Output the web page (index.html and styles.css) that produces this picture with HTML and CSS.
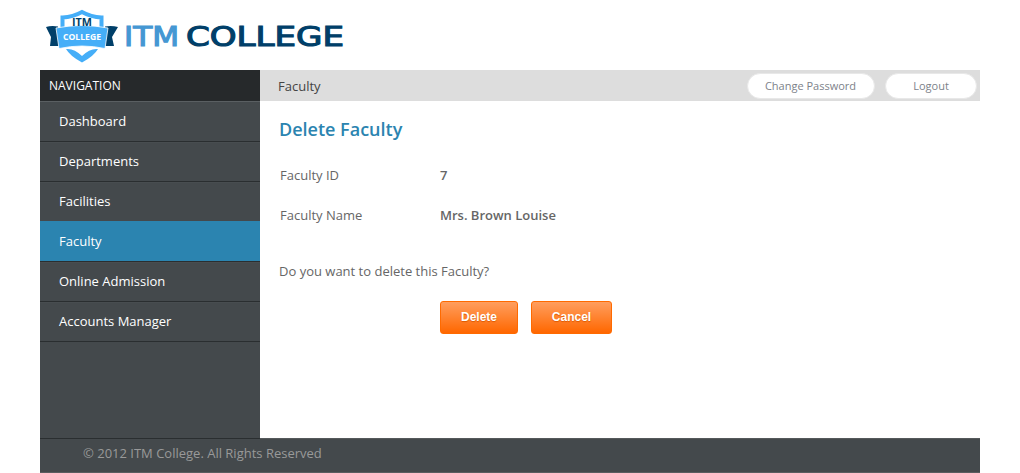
FILE: index.html
```html
<!DOCTYPE html>
<html lang="en">
<head>
<meta charset="utf-8">
<title>Delete Faculty</title>
<link rel="stylesheet" href="styles.css">
</head>
<body>
<div class="page">
  <header class="header">
    <svg class="logo" width="310" height="70" viewBox="40 0 310 70" role="img" aria-label="ITM College">
      <path fill="#003f69" d="M46 27Q51 25.500 58 26.500L59 46H50L51 37ZM118 27Q112 25.500 105 26.500L104 46H114L112 37Z"/>
      <path fill="#fff" stroke="#45aef8" stroke-width="4" d="M62.500 28V17.500Q73 17 82 12Q91 17 101.500 17.500V28"/>
      <path fill="#45aef8" stroke="#fff" stroke-width=".8" d="M56 28Q82 23 108 28L105 48.500Q82 43.500 59 48.500Z"/>
      <path fill="#45aef8" d="M66 49Q74 48 82 56Q90 48 98 49Q94 56 82 62.500Q70 56 66 49Z"/>
      <text class="badge-top" x="72" y="26" textLength="20" lengthAdjust="spacingAndGlyphs">ITM</text>
      <text class="badge-name" x="63" y="40" textLength="38" lengthAdjust="spacingAndGlyphs">COLLEGE</text>
      <text class="word word-light" x="124" y="46" textLength="55" lengthAdjust="spacingAndGlyphs">ITM</text>
      <text class="word word-dark" x="186" y="46" textLength="158" lengthAdjust="spacingAndGlyphs">COLLEGE</text>
    </svg>
  </header>
  <div class="columns">
    <nav class="sidebar">
      <h2 class="nav-title">NAVIGATION</h2>
      <a class="nav-item">Dashboard</a>
      <a class="nav-item">Departments</a>
      <a class="nav-item before-active">Facilities</a>
      <a class="nav-item active">Faculty</a>
      <a class="nav-item">Online Admission</a>
      <a class="nav-item">Accounts Manager</a>
    </nav>
    <main class="main">
      <div class="topbar">
        <span class="crumb">Faculty</span>
        <a class="pill pill-password">Change Password</a>
        <a class="pill pill-logout">Logout</a>
      </div>
      <section class="content">
        <h1 class="title">Delete Faculty</h1>
        <dl class="details">
          <dt>Faculty ID</dt><dd>7</dd>
          <dt>Faculty Name</dt><dd>Mrs. Brown Louise</dd>
        </dl>
        <p class="question">Do you want to delete this Faculty?</p>
        <div class="actions">
          <button class="button button-delete">Delete</button>
          <button class="button button-cancel">Cancel</button>
        </div>
      </section>
    </main>
  </div>
  <footer class="footer">© 2012 ITM College. All Rights Reserved</footer>
</div>
</body>
</html>
```
FILE: styles.css
```css
* { box-sizing: border-box; }
body { margin: 0; background: #fff; color: #666; font: 13px/20px "Open Sans", sans-serif; }
.page { width: 940px; height: 473px; margin: 0 auto; overflow: hidden; }
.header { height: 70px; }
.logo { display: block; }
.badge-top { font: 700 10px "Open Sans", sans-serif; fill: #003f69; }
.badge-name { font: 700 9px "Open Sans", sans-serif; fill: #fff; }
.word { font: 26px "DejaVu Sans", sans-serif; stroke-width: 1.1px; }
.word-light { fill: #4597d3; stroke: #4597d3; }
.word-dark { fill: #003f69; stroke: #003f69; }
.columns { display: flex; height: 368px; }
.sidebar { width: 220px; height: 369px; background: #44494c; border-bottom: 1px solid #2a2e30; position: relative; }
.nav-title { height: 31px; margin: 0; padding-left: 9px; background: #26292b; color: #fff; font-size: 12px; font-weight: 400; line-height: 31px; }
.nav-item { display: block; height: 40px; padding-left: 19px; border-top: 1px solid #484d50; border-bottom: 1px solid #2a2e30; color: #fff; line-height: 36px; }
.nav-item:first-of-type { height: 41px; border-top-color: #5a5f62; line-height: 38px; }
.nav-item.before-active { height: 39px; border-bottom: 0; }
.nav-item.active { height: 41px; border-top-color: #2b84b0; line-height: 38px; background: #2b84b0; }
.main { flex: 1; }
.topbar { display: flex; align-items: center; height: 31px; padding: 0 3px 0 18px; background: #ddd; }
.crumb { flex: 1; padding-top: 1px; color: #444; }
.pill { height: 26px; margin-top: 1px; border: 1px solid #e8e8e8; border-radius: 13px; background: #fff; color: #7d828a; font-size: 11px; line-height: 24px; text-align: center; }
.pill-password { width: 128px; margin-right: 10px; padding-right: 1px; }
.pill-logout { width: 92px; }
.content { padding: 16px 19px 0; }
.title { margin: 0; color: #2b84b0; font-size: 18px; font-weight: 600; line-height: 24px; }
.details { display: grid; grid-template-columns: 160px 1fr; row-gap: 20px; margin: 24px 0 0 1px; }
.details dd { margin: 0; font-weight: 600; }
.question { margin: 36px 0 0; }
.actions { display: flex; gap: 13px; margin: 20px 0 0 161px; }
.button { height: 33px; padding: 0 0 2px; border: 1px solid #ff6a00; border-radius: 3px; background: linear-gradient(#ff9e5e, #ff6700); color: #fff; font: bold 12px "Liberation Sans", sans-serif; text-shadow: 0 1px 1px #dc5a00; }
.button-delete { width: 78px; }
.button-cancel { width: 81px; }
.footer { height: 35px; padding: 4px 0 0 43px; border-top: 1px solid #55595b; border-bottom: 1px solid #5a5d60; background: #44494c; color: #999; }
```
